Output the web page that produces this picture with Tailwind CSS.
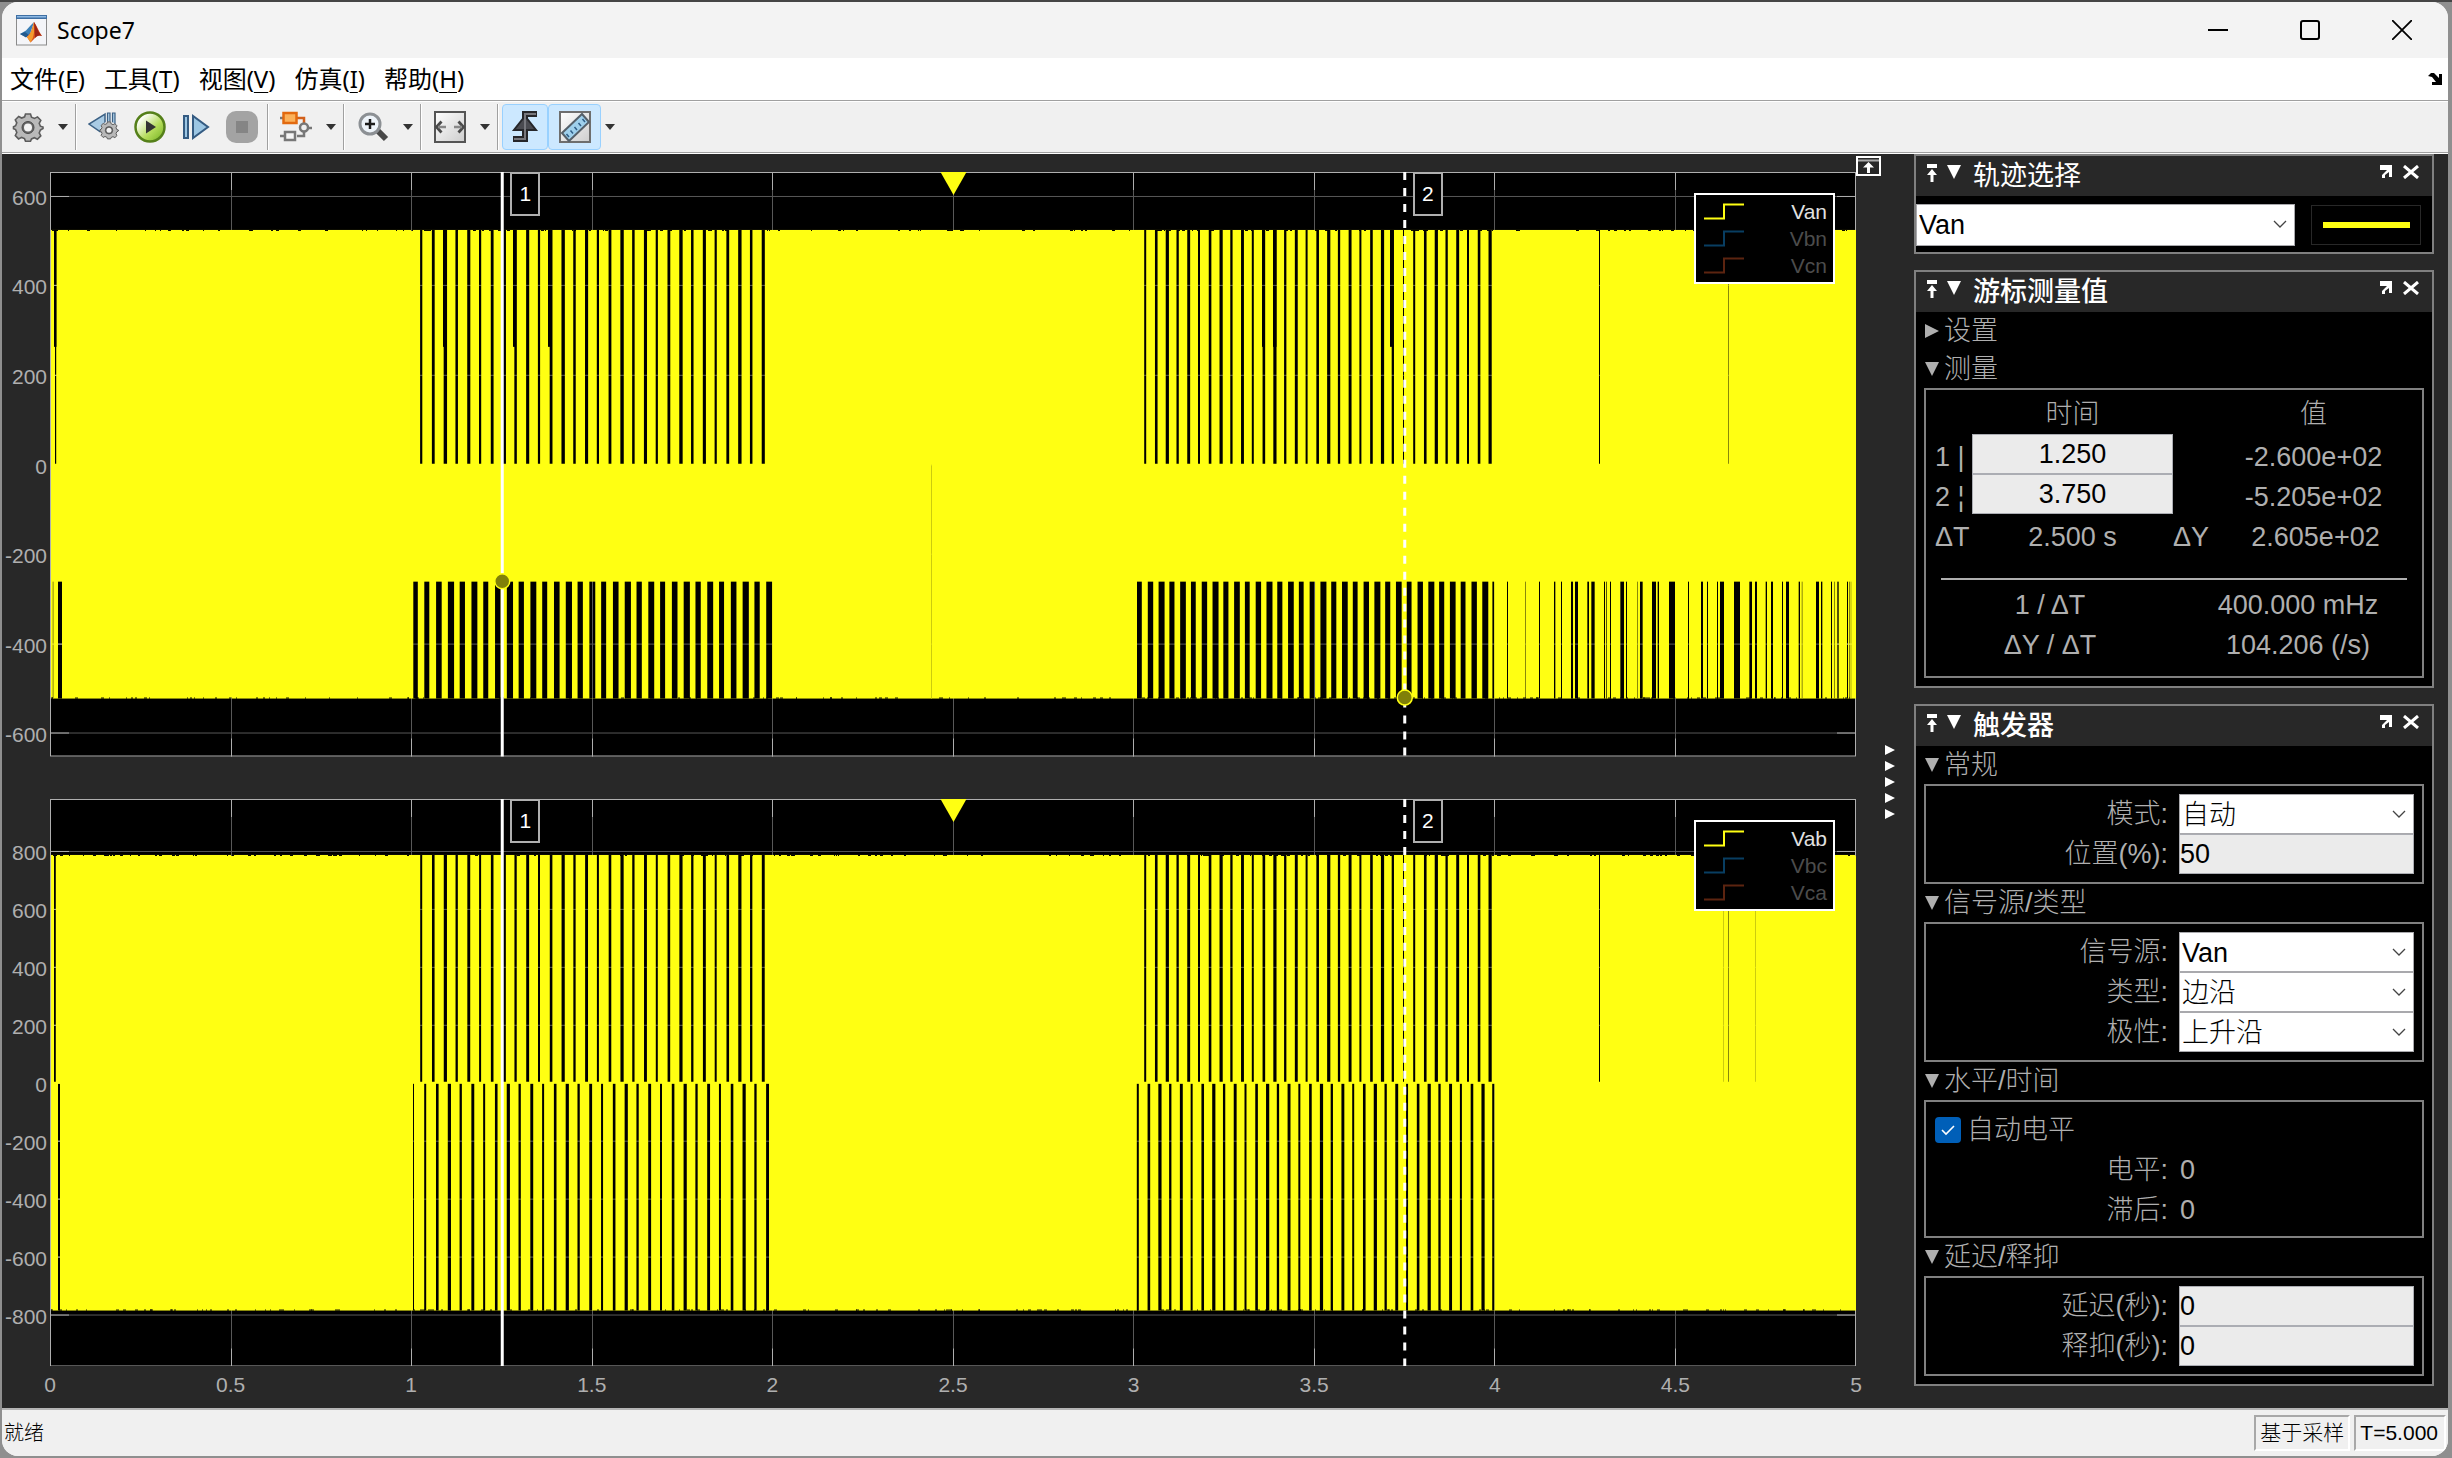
<!DOCTYPE html>
<html lang="zh-CN">
<head>
  <meta charset="UTF-8">
  <meta name="viewport" content="width=device-width, initial-scale=1.0">
  <title>Scope7</title>
  <script src="https://cdn.jsdelivr.net/npm/@tailwindcss/browser@4"></script>
</head>
<body class="h-screen overflow-hidden bg-[#8f8f8f] border-t-2 border-[#454545] pl-[2px] pr-1 pb-[2px] font-['Liberation_Sans','Noto_Sans_CJK_SC',sans-serif]">

<!-- Shared symbols -->
<svg class="hidden" aria-hidden="true">
  <symbol id="i-pin" viewBox="0 0 12 20"><path d="M1 1h10v4H1zM6 6l5 6H7.500v7h-3v-7H1z" fill="currentColor"/></symbol>
  <symbol id="i-down" viewBox="0 0 14 14"><path d="M0 0h14L7 14z" fill="currentColor"/></symbol>
  <symbol id="i-right" viewBox="0 0 14 14"><path d="M0 0v14L14 7z" fill="currentColor"/></symbol>
  <symbol id="i-undock" viewBox="0 0 14 14"><path d="M1 0h12v12h-3V7L6 10v3H3v-3l5-5H1z" fill="currentColor"/></symbol>
  <symbol id="i-x" viewBox="0 0 16 14"><path d="M1 1l14 12M15 1L1 13" stroke="currentColor" stroke-width="3"/></symbol>
  <symbol id="i-chev" viewBox="0 0 14 8"><path d="M1 1l6 6 6-6" fill="none" stroke="#444" stroke-width="1.300"/></symbol>
  <symbol id="i-caret" viewBox="0 0 10 6"><path d="M0 0h10L5 6z" fill="#333"/></symbol>
  <symbol id="i-gear" viewBox="0 0 32 32">
    <path d="M13.500 3h5l1 3.200 3 1.200 3-1.500 3.300 3.400-1.600 3 1.200 2.900 2.600.8v1.500l-2.600 1.500-1.200 2.900 1.600 3-3.400 3.300-3-1.500-2.900 1.200-1 2.300h-5l-1-2.600-2.900-1.200-3 1.500-3.300-3.400 1.500-3-1.200-2.900-2.100-.9v-2l2.100-1 1.200-2.900-1.500-3 3.400-3.300 3 1.500 2.900-1.200z" fill="#b9b9b9" stroke="#5c5c5c" stroke-width="1.600"/>
    <circle cx="16" cy="16.500" r="6" fill="#666"/><circle cx="16" cy="16.500" r="4" fill="#f4f4f4"/><circle cx="16" cy="16.500" r="6" fill="none" stroke="#4a4a4a"/>
  </symbol>
</svg>

<!-- ========== SCOPE WINDOW ========== -->
<div class="flex flex-col h-full rounded-2xl overflow-hidden bg-[#f0f0f0]">

  <!-- Title bar -->
  <header class="flex items-center h-14 shrink-0 bg-[#f3f3f3] pl-[14px]">
    <svg class="w-[31px] h-[31px]" viewBox="0 0 31 31">
      <rect x=".5" y=".5" width="30" height="29.500" fill="#f4f5f8" stroke="#8b8b8b"/>
      <rect x="0" y="0" width="31" height="4" fill="#3f6fa3"/><rect x="1" y="1" width="29" height="1.500" fill="#8db9e4"/>
      <path d="M4 19l6-3.500L15 10l3-3-4 12-4 3z" fill="#3b7fb5"/>
      <path d="M4 19l5-2 4 3-3 2.500z" fill="#235a8c"/>
      <path d="M18 7c3 4 5 10 8 14-3-1-5-1-7 2l-4.500 4.500L11 22l4-5z" fill="#d8501c"/>
      <path d="M18 7c-1 6-3 12-7 15l3.500 5.500C18 23 19 14 18 7z" fill="#f39a2d"/>
      <path d="M18 7c3 5 4 10 8 14-3-1-5 0-7 2z" fill="#9c2416"/>
    </svg>
    <h1 class="ml-[10px] text-[23px] leading-8 text-black font-['Noto_Sans',sans-serif]">Scope7</h1>
    <div class="flex ml-auto">
      <button aria-label="最小化" class="grid place-items-center w-[92px] h-14"><svg class="w-5 h-5" viewBox="0 0 20 20"><path d="M0 10h20" stroke="#000" stroke-width="2"/></svg></button>
      <button aria-label="最大化" class="grid place-items-center w-[92px] h-14"><svg class="w-5 h-5" viewBox="0 0 20 20"><rect x="1" y="1" width="18" height="18" rx="2" fill="none" stroke="#000" stroke-width="2"/></svg></button>
      <button aria-label="关闭" class="grid place-items-center w-[92px] h-14"><svg class="w-5 h-5" viewBox="0 0 20 20"><path d="M0 0l20 20M20 0L0 20" stroke="#000" stroke-width="1.800"/></svg></button>
    </div>
  </header>

  <!-- Menu bar -->
  <nav class="flex items-center h-[43px] shrink-0 bg-white border-b border-[#a0a0a0] pl-2 pr-[6px] gap-[19px] text-2xl text-black font-['Noto_Sans','Noto_Sans_CJK_SC',sans-serif]">
    <button>文件(<u class="underline-offset-4 decoration-1">F</u>)</button>
    <button>工具(<u class="underline-offset-4 decoration-1">T</u>)</button>
    <button>视图(<u class="underline-offset-4 decoration-1">V</u>)</button>
    <button>仿真(<u class="underline-offset-4 decoration-1">I</u>)</button>
    <button>帮助(<u class="underline-offset-4 decoration-1">H</u>)</button>
    <button aria-label="停靠" class="ml-auto"><svg class="w-[14px] h-3" viewBox="0 0 14 12"><path d="M0 3l3-3h3l5 5V1h3v11H4V9h4L4 4z" fill="#000"/></svg></button>
  </nav>

  <!-- Toolbar -->
  <div class="flex items-center h-[52px] shrink-0 bg-[#f0f0f0] border-y border-t-white border-b-[#a0a0a0] pl-[3px]">
    <button aria-label="配置属性" class="grid place-items-center w-[46px]"><svg class="w-8 h-8"><use href="#i-gear"/></svg></button>
    <button aria-label="配置菜单" class="grid place-items-center w-6 h-10"><svg class="w-[10px] h-[6px]"><use href="#i-caret"/></svg></button>
    <span class="w-[2px] h-[46px] bg-[#a0a0a0] border-r border-white mr-1"></span>

    <button aria-label="步退选项" class="grid place-items-center w-[46px]">
      <svg class="w-8 h-8" viewBox="0 0 32 32">
        <path d="M17 3v21L1 13z" fill="#a9cbe4" stroke="#3c6185" stroke-width="1.500"/><path d="M19.500 2h2.500v18h-2.500zM24.500 2h2.500v18h-2.500z" fill="#a9cbe4" stroke="#3c6185" stroke-width="1.200"/>
        <circle cx="21" cy="19.500" r="9" fill="#f0f0f0"/>
        <svg x="11" y="9" width="20" height="20"><use href="#i-gear"/></svg>
      </svg>
    </button>
    <button aria-label="运行" class="grid place-items-center w-[46px]">
      <svg class="w-8 h-8" viewBox="0 0 32 32">
        <defs><linearGradient id="g-run" x2="1" y2="1"><stop offset=".2" stop-color="#fdfefa"/><stop offset=".6" stop-color="#b4dc5a"/><stop offset="1" stop-color="#6fae1c"/></linearGradient></defs>
        <circle cx="16" cy="16" r="14.500" fill="url(#g-run)" stroke="#55801a" stroke-width="2.500"/><path d="M12 9.500v13L22 16z" fill="#333"/>
      </svg>
    </button>
    <button aria-label="步进" class="grid place-items-center w-[46px]">
      <svg class="w-8 h-8" viewBox="0 0 32 32"><path d="M4 5h4v22H4zM13 5v22l15-11z" fill="#9cc6e3" stroke="#345b82" stroke-width="2"/></svg>
    </button>
    <button aria-label="停止" class="grid place-items-center w-[46px]">
      <svg class="w-8 h-8" viewBox="0 0 32 32"><rect width="32" height="32" rx="10" fill="#a3a3a3"/><rect x="10" y="10" width="12" height="12" fill="#858585"/></svg>
    </button>
    <span class="w-[2px] h-[46px] bg-[#a0a0a0] border-r border-white ml-[2px] mr-1"></span>

    <button aria-label="突出显示信号" class="grid place-items-center w-[46px]">
      <svg class="w-8 h-8" viewBox="0 0 32 32" fill="none">
        <path d="M0 7h4" stroke="#777" stroke-width="2.500"/><path d="M16 7h8v7" stroke="#d2601b" stroke-width="2.500"/>
        <rect x="3.500" y="2" width="13" height="10" fill="#fbb15a" stroke="#e2690f" stroke-width="2.500"/>
        <circle cx="24" cy="16.500" r="4" fill="#eee" stroke="#777" stroke-width="2.500"/><path d="M28 17h4M0 25h4M17 25h7v-5" stroke="#777" stroke-width="2.500"/>
        <rect x="5" y="21" width="10" height="8" fill="#f5f5f5" stroke="#777" stroke-width="2.500"/>
      </svg>
    </button>
    <button aria-label="信号菜单" class="grid place-items-center w-6 h-10"><svg class="w-[10px] h-[6px]"><use href="#i-caret"/></svg></button>
    <span class="w-[2px] h-[46px] bg-[#a0a0a0] border-r border-white mr-[5px]"></span>

    <button aria-label="放大" class="grid place-items-center w-[46px]">
      <svg class="w-8 h-8" viewBox="0 0 32 32" fill="none">
        <path d="M20 19l9 9" stroke="#484848" stroke-width="6"/><circle cx="13" cy="13" r="10" fill="#eef4fa" stroke="#8c9094" stroke-width="3"/><path d="M13 8v10M8 13h10" stroke="#1c1c1c" stroke-width="2.500"/>
      </svg>
    </button>
    <button aria-label="缩放菜单" class="grid place-items-center w-6 h-10"><svg class="w-[10px] h-[6px]"><use href="#i-caret"/></svg></button>
    <span class="w-[2px] h-[46px] bg-[#a0a0a0] border-r border-white mr-[5px]"></span>

    <button aria-label="缩放以适应" class="grid place-items-center w-[46px]">
      <svg class="w-8 h-8" viewBox="0 0 32 32">
        <defs><linearGradient id="g-fit" x2="1" y2="1"><stop stop-color="#fff"/><stop offset="1" stop-color="#cdcdcd"/></linearGradient></defs>
        <rect x="1" y="1" width="30" height="30" fill="url(#g-fit)" stroke="#555" stroke-width="2"/>
        <path d="M7.500 10.500L2.500 16l5 5.500M24.500 10.500l5 5.500-5 5.500" fill="none" stroke="#4a4a4a" stroke-width="2.800"/><path d="M4 16h8M20 16h8" stroke="#888" stroke-width="2.500"/>
      </svg>
    </button>
    <button aria-label="适应菜单" class="grid place-items-center w-6 h-10"><svg class="w-[10px] h-[6px]"><use href="#i-caret"/></svg></button>
    <span class="w-[2px] h-[46px] bg-[#a0a0a0] border-r border-white mr-[3px]"></span>

    <button aria-label="触发器" aria-pressed="true" class="grid place-items-center w-[46px] h-[46px] rounded-sm bg-[#cce8ff] border border-[#99d1ff]">
      <svg class="w-8 h-8" viewBox="0 0 32 32">
        <path d="M4 28h12V3h12" fill="none" stroke="#26262a" stroke-width="6"/><path d="M16 5L5 19h22z" fill="#4a4a50" stroke="#26262a" stroke-width="2"/><path d="M5 28h11V3h11" fill="none" stroke="#77777d" stroke-width="2"/>
      </svg>
    </button>
    <button aria-label="游标测量" aria-pressed="true" class="grid place-items-center w-[53px] h-[46px] rounded-sm bg-[#cce8ff] border border-[#99d1ff]">
      <svg class="w-8 h-8" viewBox="0 0 32 32">
        <rect x="1" y="1" width="30" height="30" fill="url(#g-fit)" stroke="#6e6e6e" stroke-width="2"/>
        <path d="M3 22L23 3l7 8L10 30z" fill="#9fd0ec" stroke="#55606a" stroke-width="2"/><path d="M10 26l-2.500-3M14 22.500l-2.500-3M18 19l-2.500-3M22 15l-2.500-3M26 11l-2.500-3" stroke="#2f5f88" stroke-width="1.500"/>
      </svg>
    </button>
    <button aria-label="测量菜单" class="grid place-items-center w-[18px] h-10"><svg class="w-[10px] h-[6px]"><use href="#i-caret"/></svg></button>
  </div>

  <!-- Plots and side panels -->
  <main class="flex flex-1 min-h-0 bg-[#282828] border-t border-white">

    <!-- Plot column -->
    <section class="flex flex-col flex-1 min-w-0 pt-[18px] text-[21px] leading-6 text-[#afafaf]">
      <div class="flex flex-[585] min-h-0">
        <div id="ylab1" class="relative w-12 shrink-0"></div>
        <div class="relative flex-1 min-w-0">
          <svg id="plot1" class="block w-full h-full" viewBox="0 0 1806 585" preserveAspectRatio="none"></svg>
          <div id="tags1" class="absolute inset-0"></div>
          <div class="absolute right-[21px] top-[21px] w-[141px] border-2 border-white bg-black py-[3px] pl-2 pr-[6px] leading-[27px]">
            <div class="flex justify-between items-center text-[#e0e0e0]"><svg class="w-10 h-[17px]" viewBox="0 0 40 17"><path d="M0 15.500h20V1.500h20" fill="none" stroke="#ffff12" stroke-width="2"/></svg><span>Van</span></div>
            <div class="flex justify-between items-center text-[#4c4c4c]"><svg class="w-10 h-[17px]" viewBox="0 0 40 17"><path d="M0 15.500h20V1.500h20" fill="none" stroke="#083e62" stroke-width="2"/></svg><span>Vbn</span></div>
            <div class="flex justify-between items-center text-[#4c4c4c]"><svg class="w-10 h-[17px]" viewBox="0 0 40 17"><path d="M0 15.500h20V1.500h20" fill="none" stroke="#5c2410" stroke-width="2"/></svg><span>Vcn</span></div>
          </div>
        </div>
      </div>

      <div class="flex flex-[568] min-h-0 mt-[42px]">
        <div id="ylab2" class="relative w-12 shrink-0"></div>
        <div class="relative flex-1 min-w-0">
          <svg id="plot2" class="block w-full h-full" viewBox="0 0 1806 568" preserveAspectRatio="none"></svg>
          <div id="tags2" class="absolute inset-0"></div>
          <div class="absolute right-[21px] top-[21px] w-[141px] border-2 border-white bg-black py-[3px] pl-2 pr-[6px] leading-[27px]">
            <div class="flex justify-between items-center text-[#e0e0e0]"><svg class="w-10 h-[17px]" viewBox="0 0 40 17"><path d="M0 15.500h20V1.500h20" fill="none" stroke="#ffff12" stroke-width="2"/></svg><span>Vab</span></div>
            <div class="flex justify-between items-center text-[#4c4c4c]"><svg class="w-10 h-[17px]" viewBox="0 0 40 17"><path d="M0 15.500h20V1.500h20" fill="none" stroke="#083e62" stroke-width="2"/></svg><span>Vbc</span></div>
            <div class="flex justify-between items-center text-[#4c4c4c]"><svg class="w-10 h-[17px]" viewBox="0 0 40 17"><path d="M0 15.500h20V1.500h20" fill="none" stroke="#5c2410" stroke-width="2"/></svg><span>Vca</span></div>
          </div>
        </div>
      </div>
      <div id="xlab" class="relative h-[42px] shrink-0 ml-12"></div>
    </section>

    <!-- Splitter -->
    <div class="flex flex-col items-start w-[58px] shrink-0 pt-[2px]">
      <button aria-label="最大化坐标区" class="text-white"><svg class="block w-[25px] h-[20px]" viewBox="0 0 25 20"><rect x="1" y="1" width="23" height="18" fill="#282828" stroke="#fff" stroke-width="2"/><path d="M2 4.500h21" stroke="#aaa" stroke-width="2"/><path d="M12.500 6l5.500 5.500h-4v5.500h-3v-5.500H7z" fill="#fff"/></svg></button>
      <button aria-label="折叠面板" class="flex flex-col gap-[6px] my-auto ml-[29px] text-white pb-[20px]">
        <svg class="w-[10px] h-[10px]"><use href="#i-right"/></svg>
        <svg class="w-[10px] h-[10px]"><use href="#i-right"/></svg>
        <svg class="w-[10px] h-[10px]"><use href="#i-right"/></svg>
        <svg class="w-[10px] h-[10px]"><use href="#i-right"/></svg>
        <svg class="w-[10px] h-[10px]"><use href="#i-right"/></svg>
      </button>
    </div>

    <!-- Side panels -->
    <aside class="flex flex-col gap-4 w-[520px] shrink-0 mr-[14px] text-[27px] leading-10 text-[#afafaf] font-light">

      <!-- Trace selection -->
      <section class="border-2 border-[#808080] bg-black">
        <header class="flex items-start h-10 bg-[#282828] pl-[10px] pr-[13px] text-white">
          <svg class="w-3 h-5 mt-[7px]"><use href="#i-pin"/></svg>
          <svg class="w-[14px] h-[14px] ml-[9px] mt-[9px]"><use href="#i-down"/></svg>
          <h2 class="ml-3 font-normal">轨迹选择</h2>
          <button aria-label="取消停靠" class="ml-auto h-8 grid items-center"><svg class="w-[14px] h-[14px]"><use href="#i-undock"/></svg></button>
          <button aria-label="关闭" class="ml-[10px] h-8 grid items-center"><svg class="w-4 h-[14px]"><use href="#i-x"/></svg></button>
        </header>
        <div class="flex items-center pt-2 pb-[6px] pr-[11px]">
          <div class="relative w-[379px]">
            <select aria-label="轨迹" class="block w-full h-[42px] appearance-none bg-white text-black border border-[#a9a9ad] pl-[2px]"><option>Van</option></select>
            <svg class="absolute right-2 top-4 w-[14px] h-2 pointer-events-none"><use href="#i-chev"/></svg>
          </div>
          <button aria-label="线条样式" class="grid place-items-center w-[110px] h-10 ml-auto border border-[#282828]"><span class="block w-[87px] h-[6px] bg-[#ffff12]"></span></button>
        </div>
      </section>

      <!-- Cursor measurements -->
      <section class="border-2 border-[#808080] bg-black">
        <header class="flex items-start h-10 bg-[#282828] pl-[10px] pr-[13px] text-white">
          <svg class="w-3 h-5 mt-[7px]"><use href="#i-pin"/></svg>
          <svg class="w-[14px] h-[14px] ml-[9px] mt-[9px]"><use href="#i-down"/></svg>
          <h2 class="ml-3 font-medium">游标测量值</h2>
          <button aria-label="取消停靠" class="ml-auto h-8 grid items-center"><svg class="w-[14px] h-[14px]"><use href="#i-undock"/></svg></button>
          <button aria-label="关闭" class="ml-[10px] h-8 grid items-center"><svg class="w-4 h-[14px]"><use href="#i-x"/></svg></button>
        </header>
        <h3 class="flex items-center h-[38px] pl-[9px] gap-[5px]"><svg class="w-[14px] h-[14px]"><use href="#i-right"/></svg>设置</h3>
        <h3 class="flex items-center h-[38px] pl-[9px] gap-[5px]"><svg class="w-[14px] h-[14px]"><use href="#i-down"/></svg>测量</h3>
        <div class="mx-2 mb-2 border-2 border-[#808080] pt-[4px] pb-[11px]">
          <table class="w-full table-fixed whitespace-nowrap text-center">
            <colgroup><col class="w-[46px]"><col class="w-[201px]"><col class="w-9"><col></colgroup>
            <thead><tr><th></th><th class="font-light h-[38px] p-0">时间</th><th></th><th class="font-light p-0 pr-1">值</th></tr></thead>
            <tbody>
              <tr><td class="text-left pl-[9px]"><label for="cur1" class="block h-10 leading-[46px]">1&nbsp;|</label></td><td><input id="cur1" type="text" value="1.250" class="block w-full h-10 bg-[#ebebeb] border border-[#abadb3] text-black text-center"></td><td></td><td class="pr-1"><output class="block h-10 leading-[46px]">-2.600e+02</output></td></tr>
              <tr><td class="text-left pl-[9px]"><label for="cur2" class="block h-10 leading-[46px]">2&nbsp;¦</label></td><td><input id="cur2" type="text" value="3.750" class="block w-full h-10 bg-[#ebebeb] border border-[#abadb3] text-black text-center"></td><td></td><td class="pr-1"><output class="block h-10 leading-[46px]">-5.205e+02</output></td></tr>
              <tr><td class="text-left pl-[9px]"><span class="block h-10 leading-[46px]">ΔT</span></td><td><output class="block h-10 leading-[46px]">2.500 s</output></td><td><span class="block h-10 leading-[46px]">ΔY</span></td><td><output class="block h-10 leading-[46px]">2.605e+02</output></td></tr>
            </tbody>
          </table>
          <hr class="mx-[15px] mt-[24px] mb-[5px] border-t-2 border-[#afafaf]">
          <table class="w-full table-fixed whitespace-nowrap text-center">
            <tbody>
              <tr><td>1 / ΔT</td><td>400.000 mHz</td></tr>
              <tr><td>ΔY / ΔT</td><td>104.206 (/s)</td></tr>
            </tbody>
          </table>
        </div>
      </section>

      <!-- Trigger -->
      <section class="border-2 border-[#808080] bg-black">
        <header class="flex items-start h-10 bg-[#282828] pl-[10px] pr-[13px] text-white">
          <svg class="w-3 h-5 mt-[7px]"><use href="#i-pin"/></svg>
          <svg class="w-[14px] h-[14px] ml-[9px] mt-[9px]"><use href="#i-down"/></svg>
          <h2 class="ml-3 font-medium">触发器</h2>
          <button aria-label="取消停靠" class="ml-auto h-8 grid items-center"><svg class="w-[14px] h-[14px]"><use href="#i-undock"/></svg></button>
          <button aria-label="关闭" class="ml-[10px] h-8 grid items-center"><svg class="w-4 h-[14px]"><use href="#i-x"/></svg></button>
        </header>

        <h3 class="flex items-center h-[38px] pl-[9px] gap-[5px]"><svg class="w-[14px] h-[14px]"><use href="#i-down"/></svg>常规</h3>
        <div class="grid grid-cols-[1fr_235px] gap-x-[11px] mx-2 border-2 border-[#808080] py-2 pr-2 text-right">
          <label for="mode">模式:</label>
          <div class="relative">
            <select id="mode" class="block w-full h-10 appearance-none bg-white text-black border border-[#a9a9ad] pl-[2px]"><option>自动</option></select>
            <svg class="absolute right-2 top-4 w-[14px] h-2 pointer-events-none"><use href="#i-chev"/></svg>
          </div>
          <label for="pos">位置(%):</label>
          <input id="pos" type="text" value="50" class="w-full h-10 bg-[#ebebeb] border border-[#abadb3] text-black">
        </div>

        <h3 class="flex items-center h-[38px] pl-[9px] gap-[5px]"><svg class="w-[14px] h-[14px]"><use href="#i-down"/></svg>信号源/类型</h3>
        <div class="grid grid-cols-[1fr_235px] gap-x-[11px] mx-2 border-2 border-[#808080] py-2 pr-2 text-right">
          <label for="src">信号源:</label>
          <div class="relative">
            <select id="src" class="block w-full h-10 appearance-none bg-white text-black border border-[#a9a9ad] pl-[2px]"><option>Van</option></select>
            <svg class="absolute right-2 top-4 w-[14px] h-2 pointer-events-none"><use href="#i-chev"/></svg>
          </div>
          <label for="type">类型:</label>
          <div class="relative">
            <select id="type" class="block w-full h-10 appearance-none bg-white text-black border border-[#a9a9ad] pl-[2px]"><option>边沿</option></select>
            <svg class="absolute right-2 top-4 w-[14px] h-2 pointer-events-none"><use href="#i-chev"/></svg>
          </div>
          <label for="pol">极性:</label>
          <div class="relative">
            <select id="pol" class="block w-full h-10 appearance-none bg-white text-black border border-[#a9a9ad] pl-[2px]"><option>上升沿</option></select>
            <svg class="absolute right-2 top-4 w-[14px] h-2 pointer-events-none"><use href="#i-chev"/></svg>
          </div>
        </div>

        <h3 class="flex items-center h-[38px] pl-[9px] gap-[5px]"><svg class="w-[14px] h-[14px]"><use href="#i-down"/></svg>水平/时间</h3>
        <div class="grid grid-cols-[1fr_235px] gap-x-[11px] mx-2 border-2 border-[#808080] pt-2 pb-[6px] pr-2 text-right">
          <label class="col-span-2 flex items-center gap-[6px] h-10 pl-[9px]">
            <span class="relative w-[26px] h-[26px]">
              <input type="checkbox" checked class="block w-[26px] h-[26px] appearance-none rounded bg-[#005fb8]">
              <svg class="absolute inset-0 w-[26px] h-[26px] pointer-events-none" viewBox="0 0 26 26"><path d="M7 13l4 4 8-8" fill="none" stroke="#fff" stroke-width="1.600"/></svg>
            </span>自动电平</label>
          <span>电平:</span><output class="text-left pl-[1px]">0</output>
          <span>滞后:</span><output class="text-left pl-[1px]">0</output>
        </div>

        <h3 class="flex items-center h-[38px] pl-[9px] gap-[5px]"><svg class="w-[14px] h-[14px]"><use href="#i-down"/></svg>延迟/释抑</h3>
        <div class="grid grid-cols-[1fr_235px] gap-x-[11px] mx-2 mb-2 border-2 border-[#808080] py-2 pr-2 text-right">
          <label for="delay">延迟(秒):</label>
          <input id="delay" type="text" value="0" class="w-full h-10 bg-[#ebebeb] border border-[#abadb3] text-black">
          <label for="hold">释抑(秒):</label>
          <input id="hold" type="text" value="0" class="w-full h-10 bg-[#ebebeb] border border-[#abadb3] text-black">
        </div>
      </section>
    </aside>
  </main>

  <!-- Status bar -->
  <footer class="flex items-center gap-1 h-12 shrink-0 bg-[#f0f0f0] border-t-2 border-[#b4b4b4] pl-[2px] pr-[2px] text-[21px] leading-8 text-black">
    <span class="mr-auto text-xl font-light">就绪</span>
    <span class="h-9 px-1 border-2 border-t-[#a8a8a8] border-l-[#a8a8a8] border-r-white border-b-white font-light">基于采样</span>
    <span class="h-9 pl-1 pr-[6px] border-2 border-t-[#a8a8a8] border-l-[#a8a8a8] border-r-white border-b-white">T=5.000</span>
  </footer>
</div>

<script>
  const X0 = 50, PX = 361; // left edge and pixels per second of the trace data
  const GAP = '#000', DIM = '#888';

  // n evenly spaced gaps: first centre, step, width
  const comb = (first, step, n, w) => Array.from({ length: n }, (_, k) => [first + step * k - w / 2, w + (k * 7 % 5) * 0.3]);

  // gaps of the irregular tail, in thirds of a pixel
  const tail = [[81,3],[135,3,1],[177,3],[222,4],[243,3],[273,6],[285,9],[322,5],[334,10],[372,3],[378,2],[390,3],[421,11],[438,3],[471,3,1],[480,8],[516,12],[533,4],[567,18],[624,3],[663,6],[681,3],[711,3],[720,12],[762,18],[808,8],[825,6],[857,4],[873,6],[906,3],[918,9],[956,4],[965,3,1],[1008,9],[1023,4],[1053,3],[1062,3,1],[1072,4],[1101,3],[1107,3,1],[1112,2,1]]
    .map(([x, w, d]) => [1480 + x / 3, w / 3, d]);

  // the gap that cursor 2 sits on is narrower than the rest
  const upper2 = comb(1145.2, 10.76, 33, 2).map((g, k) => k === 24 ? [1403, 1] : g);

  const plots = [
    {
      id: 1, h: 585, mid: 292.5, scale: 0.4483, ticks: [600, 400, 200, 0, -200, -400, -600],
      top: 58, bottom: 526,
      gaps: [
        { y: 58, h: 234, xs: [[55, 1.2], ...comb(421.2, 11.78, 30, 2.2), ...upper2, [1599, 1], [1728, 1, 1]] },
        { y: 58, h: 117, xs: [[54, 2.5], [443, 3], [513, 3], [548, 3], [1262, 3], [1273, 3.5], [1390, 3]] },
        { y: 293, h: 234, xs: [[931, 1, 2]] },
        { y: 410, h: 117, xs: [[52.6, 1, 1], [58, 4], [413.3, 4.5], ...comb(426.8, 11.79, 30, 5), ...comb(1139.4, 10.79, 33, 4.8), [1492.4, 1.8], ...tail] }
      ],
      marks: [[1.25, 409.5], [3.75, 526]]
    },
    {
      id: 2, h: 568, mid: 284, scale: 0.2904, ticks: [800, 600, 400, 200, 0, -200, -400, -600, -800],
      top: 56, bottom: 511,
      gaps: [
        { y: 56, h: 227, xs: [[54, 1.8], ...comb(421.2, 11.78, 30, 2), ...upper2, [1599, 1], [1723, 1, 2], [1728, 1, 1], [1755, 1, 2]] },
        { y: 285, h: 227, xs: [[58, 2], [413, 1], ...comb(425.2, 11.79, 30, 2), ...comb(1137.8, 10.77, 34, 2)] }
      ],
      marks: []
    }
  ];

  let seed = 7;
  const rnd = () => (seed = (seed * 16807) % 2147483647) / 2147483647;

  plots.forEach(p => {
    const H = p.h, W = 1806;
    let holes = '';
    p.gaps.forEach(g => g.xs.forEach(([x, w, d]) => {
      const c = d === 2 ? '#ccc' : d ? DIM : GAP;
      holes += `<rect x="${x - X0}" y="${g.y}" width="${w}" height="${g.h}" fill="${c}"/>`;
    }));
    // ragged edges where samples miss the peak
    for (let i = 0; i < 330; i++) {
      const x = Math.floor(rnd() * W), w = 1 + Math.floor(rnd() * 3);
      holes += `<rect x="${x}" y="${i % 2 ? p.top : p.bottom}" width="${w}" height="1" fill="#000"/>`;
    }

    let grid = '', tick = '';
    for (let t = 1; t < 10; t++) {
      const x = Math.ceil(t * PX / 2) + 0.5;
      grid += `M${x} 0V${H}`;
      tick += `M${x} 0v18M${x} ${H}v-18`;
    }
    p.ticks.forEach(v => {
      const y = Math.round(p.mid - v * p.scale) + 0.5;
      grid += `M0 ${y}H${W}`;
      tick += `M0 ${y}h19M${W} ${y}h-19`;
      document.getElementById('ylab' + p.id).insertAdjacentHTML('beforeend',
        `<span class="absolute right-[3px] -translate-y-1/2" style="top:${(y + 2) / H * 100}%">${v}</span>`);
    });

    document.getElementById('plot' + p.id).innerHTML = `
      <mask id="m${p.id}" maskUnits="userSpaceOnUse" x="0" y="0" width="${W}" height="${H}">
        <rect y="${p.top}" width="${W}" height="${p.bottom + 1 - p.top}" fill="#fff"/>${holes}
      </mask>
      <rect width="${W}" height="${H}" fill="#000"/>
      <path d="${grid}" stroke="#585858"/>
      <path d="${tick}" stroke="#afafaf"/>
      <rect x=".5" y=".5" width="${W - 1}" height="${H - 1}" fill="none" stroke="#afafaf"/>
      <rect x="1" width="${W - 1}" height="${H}" fill="#ffff12" mask="url(#m${p.id})"/>
      <path d="M890.500 0h26l-13 23z" fill="#ffff12"/>
      <path d="M${1.25 * PX + 1} 0V${H}" stroke="#fff" stroke-width="3"/>
      <path d="M${3.75 * PX + 1} 0V${H}" stroke="#fff" stroke-width="3" stroke-dasharray="8 8"/>
      ${p.marks.map(([t, y]) => `<circle cx="${t * PX + 1}" cy="${y}" r="7.500" fill="#808009" stroke="#ffff12" stroke-width="1.500"/>`).join('')}`;

    [[1.25, 1], [3.75, 2]].forEach(([t, n]) => {
      document.getElementById('tags' + p.id).insertAdjacentHTML('beforeend',
        `<span class="absolute top-0 ml-[9px] grid place-items-center w-[30px] h-11 border-2 border-[#afafaf] bg-black text-white" style="left:${t * PX / W * 100}%">${n}</span>`);
    });
  });

  for (let t = 0; t <= 10; t++) {
    document.getElementById('xlab').insertAdjacentHTML('beforeend',
      `<span class="absolute top-[7px] -translate-x-1/2" style="left:${t * 10}%">${t / 2}</span>`);
  }
</script>
</body>
</html>
